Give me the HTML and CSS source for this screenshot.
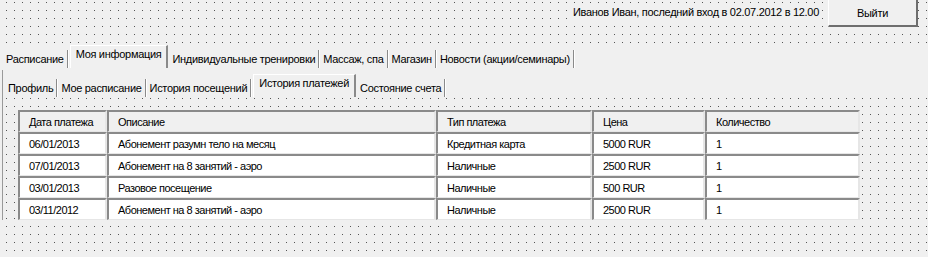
FILE: index.html
```html
<!DOCTYPE html>
<html lang="ru">
<head>
    <meta charset="UTF-8">
    <title>Мой кабинет</title>
    <link rel="stylesheet" href="styles.css">
</head>
<body>
    <div class="top-bar">
        <div class="user-info">Иванов Иван, последний вход в 02.07.2012 в 12.00</div>
        <div class="exit-button">Выйти</div>
    </div>

    <div class="tabs main-tabs">
        <div class="tab">Расписание</div>
        <div class="tab active">Моя информация</div>
        <div class="tab">Индивидуальные тренировки</div>
        <div class="tab">Массаж, спа</div>
        <div class="tab">Магазин</div>
        <div class="tab">Новости (акции/семинары)</div>
    </div>

    <div class="panel">
        <div class="tabs sub-tabs">
            <div class="tab">Профиль</div>
            <div class="tab">Мое расписание</div>
            <div class="tab">История посещений</div>
            <div class="tab active">История платежей</div>
            <div class="tab">Состояние счета</div>
        </div>

        <div class="grid-area">
            <table class="payments">
                <thead>
                    <tr>
                        <th class="col-date">Дата платежа</th>
                        <th class="col-desc">Описание</th>
                        <th class="col-type">Тип платежа</th>
                        <th class="col-price">Цена</th>
                        <th class="col-qty">Количество</th>
                    </tr>
                </thead>
                <tbody>
                    <tr>
                        <td>06/01/2013</td>
                        <td>Абонемент разумн тело на месяц</td>
                        <td>Кредитная карта</td>
                        <td>5000 RUR</td>
                        <td>1</td>
                    </tr>
                    <tr>
                        <td>07/01/2013</td>
                        <td>Абонемент на 8 занятий - аэро</td>
                        <td>Наличные</td>
                        <td>2500 RUR</td>
                        <td>1</td>
                    </tr>
                    <tr>
                        <td>03/01/2013</td>
                        <td>Разовое посещение</td>
                        <td>Наличные</td>
                        <td>500 RUR</td>
                        <td>1</td>
                    </tr>
                    <tr>
                        <td>03/11/2012</td>
                        <td>Абонемент на 8 занятий - аэро</td>
                        <td>Наличные</td>
                        <td>2500 RUR</td>
                        <td>1</td>
                    </tr>
                </tbody>
            </table>
        </div>
    </div>
</body>
</html>
```

FILE: styles.css
```css
body {
    margin: 0;
    width: 928px;
    height: 257px;
    overflow: hidden;
    background-color: #f0f0f0;
    /* design-time grid dots */
    background-image: radial-gradient(circle at 0.5px 0.5px, #555 0.65px, transparent 0.65px);
    background-size: 8px 8px;
    background-position: 6px 2px;
    font-family: "Liberation Sans", Arial, sans-serif;
    font-size: 11px;
    letter-spacing: -0.3px;
    color: #000;
}

/* header with user name and exit */
.top-bar {
    display: flex;
    justify-content: flex-end;
    align-items: flex-start;
    height: 28px;
    padding-right: 10px;
}

.user-info {
    background-color: #f0f0f0;
    margin-top: 6px;
    padding: 0 2px;
    line-height: 13px;
}

.exit-button {
    box-sizing: border-box;
    width: 90px;
    height: 28px;
    margin-left: 7px;
    margin-top: -1px;
    background-color: #f0f0f0;
    border-left: 1px solid #fff;
    border-top: 1px solid #fff;
    border-right: 2px solid #6e6e6e;
    border-bottom: 2px solid #6e6e6e;
    display: flex;
    align-items: center;
    justify-content: center;
}

/* tab strips */
.tabs {
    display: flex;
    align-items: flex-end;
    background-color: #f0f0f0;
    padding-left: 3px;
}

.main-tabs {
    margin-top: 19px;
    height: 21px;
}

.sub-tabs {
    height: 21px;
    padding-left: 2px;
    padding-top: 6px;
}

.tab {
    height: 18px;
    line-height: 18px;
    padding: 0 3px;
    border-right: 1px solid #8a8a8a;
    box-shadow: 1px 0 0 #fff;
    margin-right: 1px;
    white-space: nowrap;
}

.tab.active {
    height: 22px;
    line-height: 16px;
    padding: 0 5px;
    margin-left: 1px;
    border-left: 1px solid #fff;
    border-top: 1px solid #fff;
    border-right: 2px solid #8a8a8a;
    box-shadow: none;
    position: relative;
    top: 1px;
    align-self: flex-start;
    margin-top: -3px;
}

.panel {
    margin-top: 2px;
    border-left: 1px solid #9a9a9a;
    margin-left: 2px;
}

/* table */
.grid-area {
    padding: 13px 0 0 15px;
}

.payments {
    border-collapse: separate;
    border-spacing: 0;
    letter-spacing: -0.5px;
}

.payments th,
.payments td {
    box-sizing: border-box;
    height: 22px;
    padding: 0 0 0 9px;
    text-align: left;
    font-weight: normal;
    border-left: 2px solid #8a8a8a;
    border-top: 2px solid #8a8a8a;
    border-right: 2px solid #e6e6e6;
    border-bottom: 1px solid #e6e6e6;
    white-space: nowrap;
}

.payments th {
    background-color: #f0f0f0;
}

.payments td {
    background-color: #fff;
}

.col-date { width: 89px; }
.col-desc { width: 329px; }
.col-type { width: 156px; }
.col-price { width: 113px; }
.col-qty { width: 155px; }
```
